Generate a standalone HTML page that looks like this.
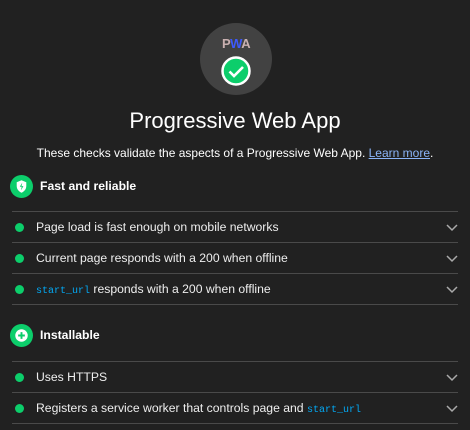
<!DOCTYPE html>
<html><head><style>
body{margin:0;width:470px;height:430px;background:#212121;font-family:"Liberation Sans",sans-serif;color:#eee;position:relative;overflow:hidden}
.a{position:absolute;white-space:nowrap}
.hr{position:absolute;left:12px;width:446px;height:1px;background:#4a4a4a}
.dot{position:absolute;left:15px;width:9px;height:9px;border-radius:50%;background:#0cce6b}
.t{position:absolute;left:36px;font-size:12.2px;color:#eee;line-height:16px}
.chev{position:absolute;left:446px}
code{font-family:"Liberation Mono",monospace;font-size:10px;color:#03a9f4}
.h{position:absolute;left:40px;font-size:12.2px;font-weight:bold;color:#fff;line-height:16px}
</style></head><body>
<div class="a" style="left:200px;top:23px;width:72px;height:72px;border-radius:50%;background:#424242"></div>
<div class="a" style="left:222px;top:36px;font-size:13px;font-weight:bold;letter-spacing:-0.5px;color:#c9b0b0">P<span style="color:#3d5afe">W</span>A</div>
<svg class="a" style="left:221px;top:56px" width="30" height="30" viewBox="0 0 30 30"><circle cx="15" cy="15" r="13.5" fill="#0cce6b" stroke="#fff" stroke-width="2.5"/><path d="M8.5 15.5l4.5 4.5 9-9" fill="none" stroke="#fff" stroke-width="2.6"/></svg>
<div class="a" style="left:0;width:470px;text-align:center;top:108px;font-size:22px;color:#fff">Progressive Web App</div>
<div class="a" style="left:0;width:470px;text-align:center;top:146px;font-size:12px;color:#fff">These checks validate the aspects of a Progressive Web App. <span style="color:#8ab4f8;text-decoration:underline">Learn more</span>.</div>

<svg class="a" style="left:10px;top:175px" width="23" height="23" viewBox="0 0 24 24"><circle cx="12" cy="12" r="12" fill="#0cce6b"/><path d="M12 5.5l5 2v4c0 3.3-2.2 5.8-5 7-2.8-1.2-5-3.7-5-7v-4z" fill="#fff"/><path d="M12.8 8l-2.6 4.3h2l-.8 3.7 2.6-4.4h-2z" fill="#0cce6b"/></svg>
<div class="h" style="top:178px">Fast and reliable</div>
<div class="hr" style="top:211px"></div>
<div class="dot" style="top:223px"></div><div class="t" style="top:219px">Page load is fast enough on mobile networks</div>
<div class="hr" style="top:242px"></div>
<div class="dot" style="top:254px"></div><div class="t" style="top:250px">Current page responds with a 200 when offline</div>
<div class="hr" style="top:273px"></div>
<div class="dot" style="top:285px"></div><div class="t" style="top:281px"><code>start_url</code> responds with a 200 when offline</div>
<div class="hr" style="top:304px"></div>

<svg class="a" style="left:10px;top:324px" width="23" height="23" viewBox="0 0 24 24"><circle cx="12" cy="12" r="12" fill="#0cce6b"/><circle cx="12" cy="12" r="6.5" fill="#fff"/><path d="M12 8.5v7M8.5 12h7" stroke="#0cce6b" stroke-width="2"/></svg>
<div class="h" style="top:327px">Installable</div>
<div class="hr" style="top:361px"></div>
<div class="dot" style="top:373px"></div><div class="t" style="top:369px">Uses HTTPS</div>
<div class="hr" style="top:392px"></div>
<div class="dot" style="top:404px"></div><div class="t" style="top:400px">Registers a service worker that controls page and <code>start_url</code></div>
<div class="hr" style="top:423px"></div>

<svg class="chev" style="top:224px" width="12" height="8"><path d="M1 1l5 5 5-5" fill="none" stroke="#aaa" stroke-width="1.5"/></svg>
<svg class="chev" style="top:255px" width="12" height="8"><path d="M1 1l5 5 5-5" fill="none" stroke="#aaa" stroke-width="1.5"/></svg>
<svg class="chev" style="top:286px" width="12" height="8"><path d="M1 1l5 5 5-5" fill="none" stroke="#aaa" stroke-width="1.5"/></svg>
<svg class="chev" style="top:374px" width="12" height="8"><path d="M1 1l5 5 5-5" fill="none" stroke="#aaa" stroke-width="1.5"/></svg>
<svg class="chev" style="top:405px" width="12" height="8"><path d="M1 1l5 5 5-5" fill="none" stroke="#aaa" stroke-width="1.5"/></svg>
</body></html>
